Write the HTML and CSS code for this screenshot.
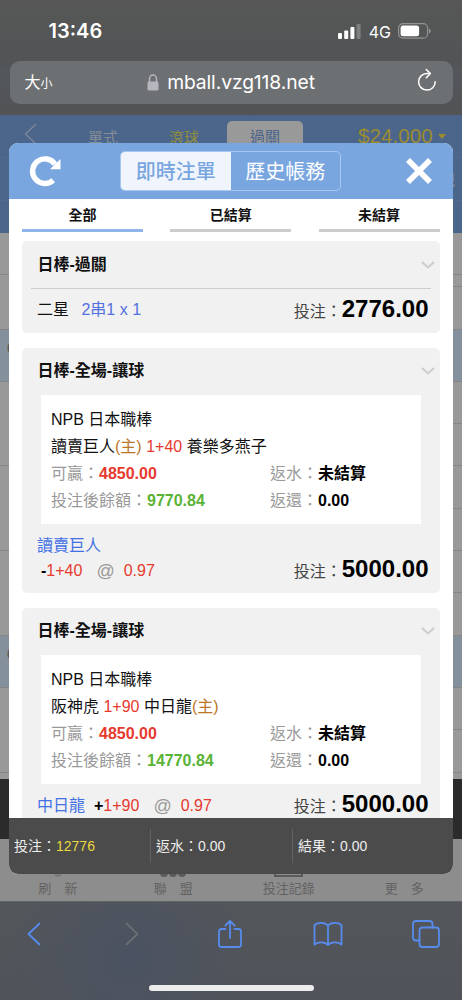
FILE: index.html
```html
<!DOCTYPE html>
<html lang="zh-Hant">
<head>
<meta charset="utf-8">
<title>即時注單</title>
<link rel="stylesheet" href="styles.css">
</head>
<body>
<div class="phone">
  <header class="chrome-top">
    <div class="status">
      <span class="time">13:46</span>
      <div class="status-icons">
        <svg width="24" height="16" viewBox="0 0 24 16" fill="#fff"><rect x="1" y="10" width="4" height="6" rx="1"/><rect x="7.2" y="7.5" width="4" height="8.500" rx="1"/><rect x="13.400" y="4" width="4" height="12" rx="1"/><rect x="19.600" y="1" width="4" height="15" rx="1" opacity=".25"/></svg>
        <span class="net">4G</span>
        <svg width="34" height="16" viewBox="0 0 34 16"><rect x=".6" y=".6" width="29" height="14.600" rx="4.500" fill="none" stroke="#929394" stroke-width="1.200"/><rect x="2.600" y="2.500" width="18.500" height="10.800" rx="2.500" fill="#fff"/><path d="M31 5.400q1.800.8 1.800 2.500T31 10.400z" fill="#929394"/></svg>
      </div>
    </div>
    <div class="address">
      <span class="aa">大<small>小</small></span>
      <div class="url">
        <svg width="12" height="17" viewBox="0 0 12 17"><path d="M2.500 9V5a3.500 4 0 0 1 7 0v4" fill="none" stroke="#b6b6bf" stroke-width="1.500"/><rect x=".5" y="7.500" width="11" height="9" rx="1.500" fill="#b6b6bf"/></svg>
        <span>mball.vzg118.net</span>
      </div>
      <svg class="reload" width="20" height="24" viewBox="0 0 20 24" fill="none" stroke="#fff" stroke-width="1.500" stroke-linecap="round" stroke-linejoin="round"><path d="M13 5.500H10A8.300 8.300 0 1 0 18.200 13.800"/><path d="M9.300 1.500 13.400 5.500 9.300 9.700"/></svg>
    </div>
  </header>

  <main class="page">
    <div class="site-head">
      <div class="site-nav">
        <svg width="14" height="22" viewBox="0 0 14 22"><path d="M12 1 1.500 11 12 21" fill="none" stroke="#7f8b9c" stroke-width="1.200"/></svg>
        <span class="nav-single">單式</span>
        <span class="nav-live">滾球</span>
        <span class="nav-parlay">過關</span>
        <span class="balance">$24,000<i></i></span>
      </div>
      <div class="site-sub">規</div>
      <div class="site-rest"></div>
    </div>
    <div class="odds">
      <div class="row r42"></div>
      <div class="row r12 right"></div>
      <div class="row r42"></div>
      <div class="row strip">0</div>
      <div class="row r42 right"></div>
      <div class="row r42"></div>
      <div class="row r42 right"></div>
      <div class="row r42"></div>
      <div class="row r42 right"></div>
      <div class="row r42"></div>
      <div class="row strip">0</div>
      <div class="row r42 right"></div>
      <div class="row r42"></div>
    </div>
    <div class="dark"></div>
    <nav class="site-tabs">
      <div><span class="arc"></span>刷　新</div>
      <div><span class="dots"><i></i><i></i><i></i></span>聯　盟</div>
      <div><span class="sheet"></span>投注記錄</div>
      <div>更　多</div>
    </nav>

    <section class="modal">
      <div class="modal-head">
        <svg class="refresh" width="32" height="32" viewBox="0 0 32 32"><path d="M24.200 25.200A12.300 12.300 0 1 1 26 9.200" fill="none" stroke="#fff" stroke-width="5.400"/><path d="M31.500 4v10.300H21z" fill="#fff"/></svg>
        <div class="switch"><span class="on">即時注單</span><span>歷史帳務</span></div>
        <svg class="close" width="28" height="28" viewBox="0 0 28 28"><path d="M3 3 25 25M25 3 3 25" stroke="#fff" stroke-width="5.600"/></svg>
      </div>
      <div class="filters"><span class="on">全部</span><span>已結算</span><span>未結算</span></div>
      <div class="list">
        <article class="card">
          <div class="title parlay">日棒-過關<svg width="14" height="8" viewBox="0 0 14 8"><path d="M1 1 7 6.500 13 1"/></svg></div>
          <div class="bet first"><span>二星 <span class="combo">2串1 x 1</span></span><span class="stake">投注：<b>2776.00</b></span></div>
        </article>
        <article class="card">
          <div class="title">日棒-全場-讓球<svg width="14" height="8" viewBox="0 0 14 8"><path d="M1 1 7 6.500 13 1"/></svg></div>
          <div class="detail">
            <p>NPB 日本職棒</p>
            <p>讀賣巨人<span class="home">(主)</span> <span class="red">1+40</span> 養樂多燕子</p>
            <div class="pair"><span>可贏：<b class="red">4850.00</b></span><span>返水：<b>未結算</b></span></div>
            <div class="pair"><span>投注後餘額：<b class="green">9770.84</b></span><span>返還：<b>0.00</b></span></div>
          </div>
          <div class="pick">讀賣巨人</div>
          <div class="bet second"><span class="line"><b>-</b><span class="red">1+40</span><span class="at">@</span><span class="red">0.97</span></span><span class="stake">投注：<b>5000.00</b></span></div>
        </article>
        <article class="card">
          <div class="title">日棒-全場-讓球<svg width="14" height="8" viewBox="0 0 14 8"><path d="M1 1 7 6.500 13 1"/></svg></div>
          <div class="detail">
            <p>NPB 日本職棒</p>
            <p>阪神虎 <span class="red">1+90</span> 中日龍<span class="home">(主)</span></p>
            <div class="pair"><span>可贏：<b class="red">4850.00</b></span><span>返水：<b>未結算</b></span></div>
            <div class="pair"><span>投注後餘額：<b class="green">14770.84</b></span><span>返還：<b>0.00</b></span></div>
          </div>
          <div class="bet third"><span class="line"><span class="team">中日龍</span><b>+</b><span class="red">1+90</span><span class="at">@</span><span class="red">0.97</span></span><span class="stake">投注：<b>5000.00</b></span></div>
        </article>
      </div>
      <footer class="totals"><div>投注：<span>12776</span></div><div>返水：0.00</div><div>結果：0.00</div></footer>
    </section>
  </main>

  <footer class="chrome-bottom">
    <div class="tools">
      <svg width="14" height="24" viewBox="0 0 14 24"><path d="M12.500 1.500 1.500 12 12.500 22.500"/></svg>
      <svg class="off" width="14" height="24" viewBox="0 0 14 24"><path d="M1.500 1.500 12.500 12 1.500 22.500"/></svg>
      <svg width="26" height="30" viewBox="0 0 26 30"><path d="M8.500 10H4.500Q2 10 2 12.500V25.500Q2 28 4.500 28H21.500Q24 28 24 25.500V12.500Q24 10 21.500 10H17.500M13 19V2M8.300 6.700 13 2 17.700 6.700"/></svg>
      <svg width="30" height="26" viewBox="0 0 30 26"><path d="M15 4.500C12 1 5 1 1.500 4V23.500C5 20.500 12 20.500 15 24C18 20.500 25 20.500 28.500 23.500V4C25 1 18 1 15 4.500V24"/></svg>
      <svg width="28" height="28" viewBox="0 0 28 28"><path d="M7.500 20.500H4Q1 20.500 1 17.500V4Q1 1 4 1H17.500Q20.500 1 20.500 4V7.500"/><rect x="7.500" y="7.500" width="19.500" height="19.500" rx="3"/></svg>
    </div>
    <div class="home-bar"></div>
  </footer>
</div>
</body>
</html>
```
FILE: styles.css
```css
* { box-sizing: border-box; }
body { margin: 0; font-family: "Liberation Sans", "Noto Sans CJK TC", sans-serif; }
svg { display: block; flex: none; }
p { margin: 0; }

.phone { width: 462px; height: 1000px; display: flex; flex-direction: column; overflow: hidden; }

.chrome-top { height: 115px; padding: 16px 9.500px 0; background: linear-gradient(#565756, #525456 55%, #53575c 62%, #525355); color: #fff; font-family: Inter, "Noto Sans CJK TC", sans-serif; }
.status { height: 30px; display: flex; align-items: center; justify-content: space-between; padding: 0 20.500px 0 39px; }
.time { font-size: 20px; font-weight: 600; }
.status-icons { display: flex; align-items: center; }
.net { font-size: 16px; margin: 1px 7px 0 8px; }
.address { margin-top: 14.500px; height: 43px; border-radius: 10px; background: #6d7072; display: grid; grid-template-columns: 60px 1fr 60px; align-items: center; }
.aa { padding: 2px 0 0 15px; font-size: 16px; font-weight: 400; line-height: 20px; }
.aa small { font-size: 12px; }
.url { display: flex; justify-content: center; align-items: center; gap: 8px; font-size: 19.300px; letter-spacing: -.1px; }
.reload { justify-self: end; margin-right: 16px; margin-top: -4px; }

.page { position: relative; height: 786px; background: #999; }
.site-head { height: 118px; background: #4b658b; }
.site-nav { height: 43px; padding-left: 24px; display: flex; align-items: center; border-bottom: 1px solid #55698a; font-size: 15px; color: #858d97; }
.site-nav svg { margin-bottom: 4px; }
.nav-single { margin-left: 50px; }
.nav-live { margin-left: 51px; color: #928d3d; }
.nav-parlay { width: 76px; height: 36px; margin: 6px 0 0 28px; border-radius: 5px 5px 0 0; background: #999; color: #4b658b; display: flex; justify-content: center; align-items: center; line-height: 20px; padding-bottom: 4px; }
.balance { margin-left: 55px; font-size: 20.700px; color: #9b8c30; display: flex; align-items: center; gap: 5px; white-space: nowrap; }
.balance i { border: 4px solid transparent; border-top: 5px solid #9b8c30; border-bottom: 0; }
.site-sub { height: 43px; display: flex; justify-content: flex-end; align-items: center; padding-right: 7px; font-size: 16px; color: #858d97; border-bottom: 1px solid #55698a; }
.odds { height: 546px; overflow: hidden; }
.row { border-bottom: 1px solid #858585; background: #999; }
.r42 { height: 42.300px; }
.r12 { height: 12px; }
.right { border-image: linear-gradient(90deg, #999 50%, #858585 50%) 1; }
.strip { height: 52.300px; background: #84909b; padding: 9px 0 0 7px; font-size: 15px; color: #555; }
.dark { height: 60px; background: #2b2b2b; }
.site-tabs { height: 62px; background: #8d8d8d; display: grid; grid-template-columns: repeat(4, 1fr); font-size: 13px; color: #626262; }
.site-tabs div { display: flex; flex-direction: column; align-items: center; justify-content: flex-end; padding-bottom: 2px; line-height: 20px; white-space: nowrap; }
.dots { display: flex; gap: 1px; }
.dots i { width: 8px; height: 8px; border-radius: 50%; background: #5b5b5b; }
.site-tabs .sheet { width: 29px; height: 20px; margin-bottom: 2px; border: 2px solid #5b5b5b; }
.arc { width: 8px; height: 6px; border-radius: 0 0 8px 8px; background: #7c7c7c; }
.dots, .arc { margin-bottom: 2px; }

.modal { position: absolute; left: 9px; top: 28px; width: 443.500px; height: 730.500px; border-radius: 9px; overflow: hidden; background: #fff; color: #111; display: flex; flex-direction: column; }
.modal-head { height: 56px; flex: none; background: #79a6df; display: flex; align-items: center; padding: 0 20px 0 20px; }
.switch { margin-left: 59px; width: 221px; height: 40px; border: 1px solid #a9c8ef; border-radius: 5px; overflow: hidden; display: grid; grid-template-columns: 1fr 1fr; font-size: 20px; color: #fff; }
.switch span { display: flex; align-items: center; justify-content: center; line-height: 28px; padding-top: 1px; }
.switch .on { background: #f0f5fd; color: #79a6df; font-weight: 500; }
.close { margin-left: auto; }
.filters { height: 33px; flex: none; display: grid; grid-template-columns: 121px 121px 121px; justify-content: space-between; padding: 0 13px; font-size: 14px; font-weight: 700; line-height: 33px; text-align: center; }
.filters span { height: 33px; border-bottom: 3px solid #ccc; }
.filters .on { border-color: #8eb4e9; }
.list { flex: 1; overflow: hidden; padding: 9px 13px 0; display: flex; flex-direction: column; gap: 15px; }
.card { flex: none; background: #f1f1f1; border-radius: 5px; }
.title { height: 46.500px; padding: 0 5px 0 15.500px; display: flex; align-items: center; justify-content: space-between; font-size: 16px; font-weight: 700; line-height: 24px; }
.title path { fill: none; stroke: #ccc; stroke-width: 2; }
.title.parlay { height: 48px; margin: 0 9px; padding: 0 0 0 6.500px; border-bottom: 1px solid #ccc; }
.title.parlay svg { margin-right: -4px; }
.bet { display: flex; align-items: center; justify-content: space-between; padding: 0 11px 0 15px; font-size: 16px; line-height: 24px; white-space: nowrap; }
.first { height: 44px; padding-bottom: 2px; }
.combo { color: #5270df; margin-left: 8px; }
.stake { color: #444; display: flex; align-items: baseline; }
.stake b { font-size: 24px; color: #000; }
.detail { width: 380px; height: 129px; margin-left: 18.500px; background: #fff; padding: 11px 10.500px; font-size: 16px; line-height: 27px; }
.detail > * { height: 27px; white-space: nowrap; }
.pair { display: grid; grid-template-columns: 219px 1fr; color: #999; }
.pair b { color: #000; }
.red, .pair .red { color: #e63a2e; }
.pair .green { color: #5bb335; }
.home { color: #bd7628; }
.pick { height: 30px; padding: 8px 15px 0; font-size: 16px; line-height: 27px; color: #4370e4; }
.line { display: flex; align-items: center; padding-top: 1px; }
.line b { color: #000; }
.at { color: #999; font-size: 18px; margin: 0 9px 0 14px; }
.second { height: 39.500px; padding: 0 11px 6px 19px; }
.third { height: 60px; padding-bottom: 16px; }
.team { color: #4370e4; margin-right: 9px; }
.totals { height: 55.500px; flex: none; background: #4b4b4b; color: #eee; font-size: 14px; display: grid; grid-template-columns: 142px 142px 1fr; align-items: center; }
.totals div { height: 34px; line-height: 34px; padding-left: 5px; border-right: 1px solid #626262; }
.totals div:last-child { border: 0; }
.totals span { color: #ecd83b; }

.chrome-bottom { height: 99px; background: radial-gradient(circle at 28% 55%, #4b5261, transparent 35%), linear-gradient(#53565a, #50545a); border-top: 1px solid #626466; }
.tools { height: 64px; margin: 0 -15px; display: grid; grid-template-columns: repeat(5, 98px); align-items: center; justify-items: center; }
.tools path, .tools rect { fill: none; stroke: #578bed; stroke-width: 1.800; stroke-linecap: round; stroke-linejoin: round; }
.tools .off path { stroke: #6b6e72; }
.home-bar { width: 165px; height: 6px; margin: 19px auto 0; border-radius: 3px; background: #ececec; }
```
